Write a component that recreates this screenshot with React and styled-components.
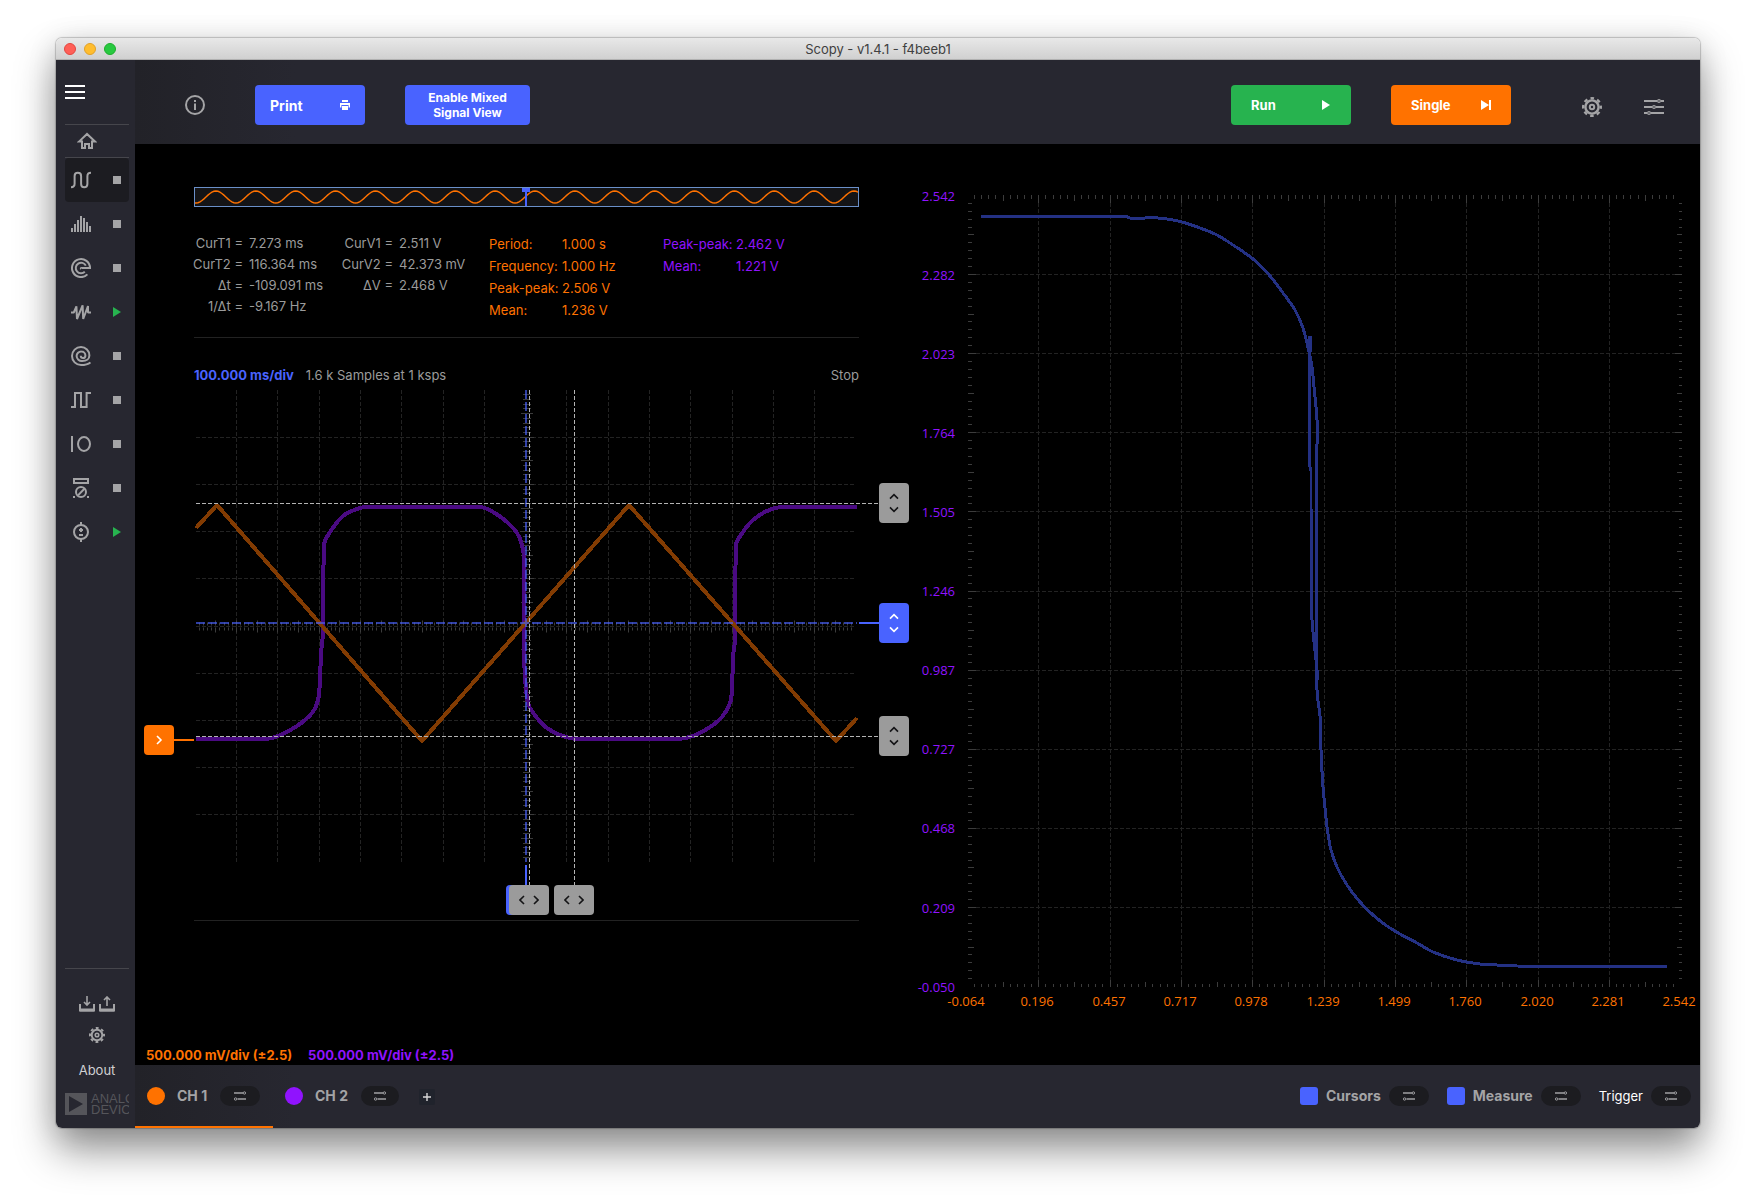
import styled, { createGlobalStyle } from "styled-components";

const TOOLS = [
	{ name: "Oscilloscope", icon: "scope", active: true },
	{ name: "Spectrum Analyzer", icon: "spectrum" },
	{ name: "Network Analyzer", icon: "network" },
	{ name: "Signal Generator", icon: "generator", running: true },
	{ name: "Logic Analyzer", icon: "logic" },
	{ name: "Pattern Generator", icon: "pattern" },
	{ name: "Digital IO", icon: "io" },
	{ name: "Voltmeter", icon: "voltmeter" },
	{ name: "Power Supply", icon: "power", running: true },
];

const TIME_CURSORS = [
	["CurT1 =", "7.273 ms"],
	["CurT2 =", "116.364 ms"],
	["Δt =", "-109.091 ms"],
	["1/Δt =", "-9.167 Hz"],
];

const VOLT_CURSORS = [
	["CurV1 =", "2.511 V"],
	["CurV2 =", "42.373 mV"],
	["ΔV =", "2.468 V"],
];

const CH1_STATS = [
	["Period:", "1.000 s"],
	["Frequency:", "1.000 Hz"],
	["Peak-peak:", "2.506 V"],
	["Mean:", "1.236 V"],
];

const CH2_STATS = [
	["Peak-peak:", "2.462 V"],
	["Mean:", "1.221 V"],
];

const Y_LABELS = ["2.542", "2.282", "2.023", "1.764", "1.505", "1.246", "0.987", "0.727", "0.468", "0.209", "-0.050"];
const X_LABELS = ["-0.064", "0.196", "0.457", "0.717", "0.978", "1.239", "1.499", "1.760", "2.020", "2.281", "2.542"];

// scope canvas, in its own units
const SCOPE = { w: 775, h: 526, left: 61, right: 722, top: 0, bottom: 472 };

const CH1_TRACE = "61,138 82,115 287,351 494,115 701,351 722,328";
const CH2_TRACE =
	"61,349 130,349 143,346 162,336 177,323 183,310 185,290 186,263 188,243 189,155 195,142 208,126 222,119 232,117 345,117 " +
	"358,122 372,132 382,143 387,155 389,170 389,263 391,300 393,313 395,318 402,328 412,338 425,345 442,349 542,349 " +
	"558,346 575,337 587,327 595,313 597,300 598,267 600,250 601,155 608,142 618,130 632,121 647,117 722,117";

const XY_TRACE =
	"71,33 218,33 219,34 248,34 257,35 272,38 290,44 307,51 323,61 343,75 360,92 373,109 385,126 393,144 399,168 402,183 " +
	"404,203 407,236 407,263 407,506 410,532 411,566 413,603 417,643 418,650 421,666 427,683 437,701 450,718 463,731 " +
	"477,742 490,750 507,759 523,768 547,776 570,780 587,781 607,782 617,782 757,782";
const XY_BACK_TRACE = "400,153 400,283 401,287 401,416 402,436 404,458 406,476 408,496";

const range = (n) => Array.from({ length: n }, (_, i) => i);

const tickSize = (i, sizes) => (i % 10 === 0 ? sizes[2] : i % 5 === 0 ? sizes[1] : sizes[0]);

// Joins sample points with a curve whose handles never outgrow their own segment
const smooth = (trace) => {
	const pts = trace.split(" ").map((p) => p.split(",").map(Number));
	const dir = pts.map((_, i) => {
		const a = pts[Math.max(i - 1, 0)];
		const b = pts[Math.min(i + 1, pts.length - 1)];
		const len = Math.hypot(b[0] - a[0], b[1] - a[1]);
		return [(b[0] - a[0]) / len, (b[1] - a[1]) / len];
	});
	let d = `M${pts[0]}`;
	for (let i = 1; i < pts.length; i++) {
		const [x0, y0] = pts[i - 1];
		const [x1, y1] = pts[i];
		const k = Math.min(Math.hypot(x1 - x0, y1 - y0) / 3, 12);
		const c0 = [x0 + dir[i - 1][0] * k, y0 + dir[i - 1][1] * k];
		const c1 = [x1 - dir[i][0] * k, y1 - dir[i][1] * k];
		d += `C${c0} ${c1} ${x1},${y1}`;
	}
	return d;
};

const ICONS = {
	scope: <path d="M0 17.2c2.5 0 3.6-1 3.6-3.4V6c0-2.2 1-3.2 3.2-3.2S10.1 4 10.1 6v8c0 2.2 1 3.2 3.1 3.2s3.2-1 3.2-3.2V6.2c0-2.4 1-3.4 3.6-3.4" />,
	spectrum: <path d="M1 18v-4M4 18v-8M7 18V6M10 18V2M13 18V4M16 18V8M19 18v-6" />,
	network: (
		<>
			<path d="M20 10h-9.6a.6.6 0 0 0-.4 1" />
			<path d="M19 10a9 9 0 1 0-2.6 6.4" />
			<path d="M14.8 7.6a5.3 5.3 0 1 0-1 6.2" />
		</>
	),
	generator: <path d="M0 10.5h2.8L5.4 4.4 6 17l5.6-13.6.6 13.6L17 4v6.5h3" strokeLinejoin="bevel" />,
	logic: (
		<path d="M19.4 16.4C17 18.4 13.5 19 10 19a9 9 0 0 1 0-18 8.4 8.4 0 0 1 8.4 8.4c0 3.2-2.8 5.6-7.2 5.6A5.2 5.2 0 0 1 5.6 10a4.6 4.6 0 0 1 4.8-4.5A4 4 0 0 1 14.4 9.4c0 1.6-1 2.6-2.4 2.6s-2.2-.8-2.2-2.2" />
	),
	pattern: <path d="M0 17h4V3h6v14h5.6V3H20" />,
	io: (
		<>
			<path d="M1 2v16" />
			<ellipse cx="13" cy="10" rx="6" ry="7" />
		</>
	),
	voltmeter: (
		<>
			<path d="M3 1h14v4H3zM7 17.4l6.4-6.6M2 19h2M16 19h2" />
			<circle cx="10" cy="14" r="5" />
		</>
	),
	power: (
		<>
			<circle cx="10" cy="10" r="7" />
			<path d="M10 0v3M10 17v3M10 6v4M8 8h4M8 13h4" />
		</>
	),
	home: <path d="M2 10.6 10 3l8 7.6h-3V17h-3v-4H8v4H5v-6.4z" />,
	info: (
		<>
			<circle cx="10" cy="10" r="9" />
			<path d="M10 8.6V15M10 5v2" />
		</>
	),
	gear: (
		<>
			<circle cx="10" cy="10" r="6.6" strokeWidth="2.4" />
			<circle cx="10" cy="10" r="8.8" strokeWidth="2.4" strokeDasharray="3.6 3.31" strokeDashoffset="1.8" />
			<circle cx="10" cy="10" r="2.2" />
		</>
	),
	sliders: (
		<>
			<path d="M0 4h13M17 4h3M0 10h8M12 10h8M0 16h3M7 16h13" />
			<circle cx="15" cy="4" r="1.4" strokeWidth="1.2" />
			<circle cx="10" cy="10" r="1.4" strokeWidth="1.2" />
			<circle cx="5" cy="16" r="1.4" strokeWidth="1.2" />
		</>
	),
};

const Icon = ({ name, size = 20, stroke = 2 }) => (
	<svg width={size} height={size} viewBox="0 0 20 20" fill="none" stroke="currentColor" strokeWidth={stroke} aria-hidden="true">
		{ICONS[name]}
	</svg>
);

const TrayIcon = ({ up }) => (
	<svg width="16" height="16" viewBox="0 0 16 16" fill="none" stroke="currentColor" aria-hidden="true">
		<path d="M1 8v6.5h14V8" strokeWidth="2" />
		<path d="M1 14h14" strokeWidth="3" />
		<path d={up ? "M8 10V1M5 4l3-3 3 3" : "M8 0v9M5 6l3 3 3-3"} strokeWidth="1.6" />
	</svg>
);

const PillIcon = () => (
	<svg width="12" height="10" viewBox="0 0 12 10" fill="none" stroke="currentColor" aria-hidden="true">
		<path d="M0 2h9M3.5 8H12" strokeWidth="1.4" />
		<circle cx="10.4" cy="2" r="1.2" />
		<circle cx="1.6" cy="8" r="1.2" />
	</svg>
);

const Chevrons = ({ axis }) => (
	<svg width="20" height="20" viewBox="0 0 20 20" fill="none" stroke="currentColor" strokeWidth="1.6" aria-hidden="true">
		{axis === "y" && <path d="M6 5.6 10 1.6l4 4M6 14.4l4 4 4-4" />}
		{axis === "x" && <path d="M5 6 1 10l4 4M15 6l4 4-4 4" />}
		{axis === "base" && <path d="M8 6l4 4-4 4" />}
	</svg>
);

const Readout = ({ rows, color, labelWidth, alignEnd, lineHeight }) => (
	<ReadoutList $color={color} $label={labelWidth} $alignEnd={alignEnd} $line={lineHeight}>
		{rows.map(([label, value]) => (
			<ReadoutRow key={label}>
				<dt>{label}</dt>
				<dd>{value}</dd>
			</ReadoutRow>
		))}
	</ReadoutList>
);

const Sidebar = () => (
	<Side>
		<MenuButton aria-label="Menu">
			<span />
			<span />
			<span />
		</MenuButton>
		<HomeButton aria-label="Home">
			<Icon name="home" />
		</HomeButton>
		<ToolList>
			{TOOLS.map((tool) => (
				<ToolItem key={tool.name} $active={tool.active}>
					<IconButton aria-label={tool.name}>
						<Icon name={tool.icon} />
					</IconButton>
					<IconButton aria-label={`${tool.running ? "Stop" : "Run"} ${tool.name}`}>
						{tool.running ? <RunMark /> : <StopMark />}
					</IconButton>
				</ToolItem>
			))}
		</ToolList>
		<SideFooter>
			<TrayRow>
				<IconButton aria-label="Load">
					<TrayIcon />
				</IconButton>
				<IconButton aria-label="Save">
					<TrayIcon up />
				</IconButton>
			</TrayRow>
			<IconButton aria-label="Preferences">
				<Icon name="gear" size={16} />
			</IconButton>
			<AboutLink href="#about">About</AboutLink>
			<Brand>
				<svg width="22" height="22" viewBox="0 0 22 22" aria-hidden="true">
					<path d="M0 0h22v22H0zM4 3v16l14-8z" fill="#55555a" fillRule="evenodd" />
				</svg>
				<BrandText>
					ANALOG
					<br />
					DEVICES
				</BrandText>
			</Brand>
		</SideFooter>
	</Side>
);

const Overview = () => {
	let d = "M0 16";
	for (let x = 1; x <= 665; x += 2) {
		d += `L${x} ${(10 + 6 * Math.cos(((x - 1) / 20) * Math.PI)).toFixed(2)}`;
	}
	return (
		<OverviewBox>
			<svg viewBox="0 0 665 18" preserveAspectRatio="none" aria-hidden="true">
				<path d={d} fill="none" stroke="#ff7200" strokeWidth="1.4" transform="translate(0 -1)" />
				<path d="M328 0h8v4h-3v14h-2V4h-3z" fill="#4963ff" />
			</svg>
		</OverviewBox>
	);
};

const Handle = ({ x, y, axis, tone, label }) => (
	<HandleButton
		aria-label={label}
		$axis={axis}
		$tone={tone}
		style={{ left: `${(x / SCOPE.w) * 100}%`, top: `${(y / SCOPE.h) * 100}%` }}
	>
		<Chevrons axis={axis} />
	</HandleButton>
);

const ScopePlot = () => {
	const dx = 41.3;
	const dy = 47.2;
	const cx = 391;
	const cy = 236.5;
	return (
		<PlotFrame>
			<svg viewBox={`0 0 ${SCOPE.w} ${SCOPE.h}`} fill="none" role="img" aria-label="Channel traces">
				<g stroke="#232323" strokeDasharray="4 2">
					{range(15).map((i) => {
						const x = Math.floor(60.2 + (i + 1) * dx) + 0.5;
						return i === 7 ? null : <path key={i} d={`M${x} ${SCOPE.top}V${SCOPE.bottom}`} />;
					})}
					{range(9).map((i) => {
						const y = Math.floor((i + 1) * dy) + 0.5;
						return <path key={i} d={`M${SCOPE.left} ${y}H${SCOPE.right - 2}`} />;
					})}
				</g>
				<g stroke="#3c3c3c">
					{range(159).map((i) => {
						const x = Math.floor(60.2 + (i + 1) * (dx / 10)) + 0.5;
						const t = tickSize(i + 1, [4, 6, 6]);
						return <path key={i} d={`M${x} ${cy - t}V${cy - 1}M${x} ${cy + 1}V${cy + t}`} />;
					})}
					{range(99).map((i) => {
						const y = Math.floor((i + 1) * (dy / 10)) + 0.5;
						const t = tickSize(i + 1, [4, 6, 7]);
						return <path key={i} d={`M${cx + 1 - t} ${y}H${cx + 1 + t}`} />;
					})}
				</g>
				<g strokeWidth="4" strokeLinejoin="round" shapeRendering="crispEdges">
					<path d={smooth(CH2_TRACE)} stroke="#4a0a82" />
					<polyline points={CH1_TRACE} stroke="#823b02" />
				</g>
				<g stroke="#4963ff" strokeWidth="2">
					<path d={`M${SCOPE.left} 233H${SCOPE.right}M${cx} 0V${SCOPE.bottom}`} strokeDasharray="9 3" opacity="0.65" />
					<path d={`M724 233H744M${cx} 475V495`} />
				</g>
				<path d="M61 113.5H744M61 346.5H744M394.5 0V495M439.5 0V495" stroke="#b4b4b4" strokeDasharray="4 2" />
				<path d="M39 350H59" stroke="#ff7200" strokeWidth="2" />
			</svg>
			<Handle x={391} y={510} axis="x" tone="blue" label="Trigger delay" />
			<Handle x={394} y={510} axis="x" tone="gray" label="Time cursor 1" />
			<Handle x={439} y={510} axis="x" tone="gray" label="Time cursor 2" />
			<Handle x={759} y={113} axis="y" tone="gray" label="Voltage cursor 1" />
			<Handle x={759} y={233} axis="y" tone="blue" label="Trigger level" />
			<Handle x={759} y={346} axis="y" tone="gray" label="Voltage cursor 2" />
			<Handle x={24} y={350} axis="base" tone="orange" label="Channel 1 offset" />
		</PlotFrame>
	);
};

const XYPlot = () => {
	const dx = 71.35;
	const dy = 79.12;
	const left = 57.4;
	const top = 11.4;
	return (
		<XYFrame>
			<svg viewBox="0 0 790 836" fill="none" role="img" aria-label="XY plot">
				<g stroke="#232323" strokeDasharray="4 2">
					{range(9).map((i) => (
						<path key={i} d={`M${Math.floor(left + (i + 1) * dx) + 0.5} 19V796`} />
					))}
					{range(9).map((i) => (
						<path key={i} d={`M66 ${Math.floor(top + (i + 1) * dy) + 0.5}H765`} />
					))}
				</g>
				<g stroke="#3c3c3c">
					{range(99).map((i) => {
						const x = Math.floor(left + (i + 1) * (dx / 10)) + 0.5;
						const y = Math.floor(top + (i + 1) * (dy / 10)) + 0.5;
						const t = tickSize(i + 1, [4, 6, 8]);
						return <path key={i} d={`M${x} 11v${t}M${x} 803v${1 - t}M58 ${y}h${t}M772 ${y}h${1 - t}`} />;
					})}
				</g>
				<g stroke="#243184" strokeWidth="3" strokeLinejoin="round" shapeRendering="crispEdges">
					<path d={smooth(XY_TRACE)} />
					<path d={smooth(XY_BACK_TRACE)} />
					<path d="M400 152v16" strokeWidth="4" />
				</g>
				<AxisText $color="#9013fe" textAnchor="end">
					{Y_LABELS.map((label, i) => (
						<text key={label} x="45" y={Math.floor(top + i * dy + 5.6)}>
							{label}
						</text>
					))}
				</AxisText>
				<AxisText $color="#ff7200" textAnchor="middle">
					{X_LABELS.map((label, i) => (
						<text key={label} x={Math.floor(left + i * dx) - 1} y="822">
							{label}
						</text>
					))}
				</AxisText>
			</svg>
		</XYFrame>
	);
};

const Pill = ({ label }) => (
	<PillButton aria-label={label}>
		<PillIcon />
	</PillButton>
);

const App = () => (
	<>
		<GlobalStyle />
		<Window>
			<TitleBar>
				<Lights>
					<Light $color="#ff5f57" $edge="#e2463f" aria-label="Close" />
					<Light $color="#ffbd2e" $edge="#e0a028" aria-label="Minimize" />
					<Light $color="#28c940" $edge="#1dad2b" aria-label="Zoom" />
				</Lights>
				<Title>Scopy - v1.4.1 - f4beeb1</Title>
			</TitleBar>
			<Body>
				<Sidebar />
				<Content>
					<Header>
						<IconButton aria-label="Info">
							<Icon name="info" />
						</IconButton>
						<PrintButton>
							Print
							<svg width="10" height="10" viewBox="0 0 10 10" fill="#fff" aria-hidden="true">
								<path d="M2 0h6v2H2zM0 3h10v4.5H8.6V5H1.4v2.5H0zM2 6h6v4H2z" />
							</svg>
						</PrintButton>
						<MixedButton>Enable Mixed Signal View</MixedButton>
						<Spacer />
						<RunButton>
							Run
							<svg width="10" height="10" viewBox="0 0 10 10" fill="#fff" aria-hidden="true">
								<path d="M1 0l8 5-8 5z" />
							</svg>
						</RunButton>
						<SingleButton>
							Single
							<svg width="10" height="10" viewBox="0 0 10 10" fill="#fff" aria-hidden="true">
								<path d="M0 0l8 5-8 5zM8 0h2v10H8z" />
							</svg>
						</SingleButton>
						<HeaderTools>
							<IconButton aria-label="Settings">
								<Icon name="gear" />
							</IconButton>
							<IconButton aria-label="General settings">
								<Icon name="sliders" />
							</IconButton>
						</HeaderTools>
					</Header>
					<Workspace>
						<ScopeColumn>
							<Overview />
							<Readouts>
								<Readout rows={TIME_CURSORS} color="#9b9b9b" labelWidth={49} lineHeight={21} alignEnd />
								<Readout rows={VOLT_CURSORS} color="#9b9b9b" labelWidth={50} lineHeight={21} alignEnd />
								<Readout rows={CH1_STATS} color="#ff7200" labelWidth={67} lineHeight={22} />
								<Readout rows={CH2_STATS} color="#9013fe" labelWidth={67} lineHeight={22} />
							</Readouts>
							<StatusRow>
								<Timebase>100.000 ms/div</Timebase>
								<span>1.6 k Samples at 1 ksps</span>
								<Spacer />
								<span>Stop</span>
							</StatusRow>
							<ScopePlot />
							<Divider />
							<ScaleRow>
								<Scale $color="#ff7200">500.000 mV/div (±2.5)</Scale>
								<Scale $color="#9013fe">500.000 mV/div (±2.5)</Scale>
							</ScaleRow>
						</ScopeColumn>
						<XYPlot />
					</Workspace>
					<Footer>
						<ChannelTab $active>
							<ChannelLabel>
								<Check type="checkbox" defaultChecked $color="#ff7200" $round />
								CH 1
							</ChannelLabel>
							<Pill label="Channel 1 settings" />
						</ChannelTab>
						<ChannelTab>
							<ChannelLabel>
								<Check type="checkbox" defaultChecked $color="#9013fe" $round />
								CH 2
							</ChannelLabel>
							<Pill label="Channel 2 settings" />
						</ChannelTab>
						<AddButton aria-label="Add channel">
							<svg width="8" height="8" viewBox="0 0 8 8" stroke="#d8d8d8" strokeWidth="1.4" aria-hidden="true">
								<path d="M4 0v8M0 4h8" />
							</svg>
						</AddButton>
						<Spacer />
						<Option>
							<OptionLabel>
								<Check type="checkbox" defaultChecked $color="#4963ff" />
								Cursors
							</OptionLabel>
							<Pill label="Cursor settings" />
						</Option>
						<Option>
							<OptionLabel>
								<Check type="checkbox" defaultChecked $color="#4963ff" />
								Measure
							</OptionLabel>
							<Pill label="Measure settings" />
						</Option>
						<Option>
							<TriggerName>Trigger</TriggerName>
							<Pill label="Trigger settings" />
						</Option>
					</Footer>
				</Content>
			</Body>
		</Window>
	</>
);

export default App;

const GlobalStyle = createGlobalStyle`
	* {
		box-sizing: border-box;
	}
	body {
		margin: 0;
		background: #fff;
		font-family: Inter, "Liberation Sans", sans-serif;
		font-size: 13px;
	}
	#root {
		display: flow-root;
	}
	button {
		font: inherit;
		cursor: pointer;
	}
	svg {
		display: block;
		flex-shrink: 0;
	}
`;

const Window = styled.div`
	display: flex;
	flex-direction: column;
	min-height: calc(100vh - 112px);
	margin: 38px 56px 74px;
	border-radius: 6px;
	overflow: hidden;
	box-shadow: 0 0 1px 1px rgba(0, 0, 0, 0.2), 0 22px 40px rgba(0, 0, 0, 0.42), 0 4px 30px rgba(0, 0, 0, 0.12);
`;

const TitleBar = styled.div`
	display: grid;
	grid-template-columns: 1fr auto 1fr;
	align-items: center;
	height: 22px;
	padding: 0 8px;
	background: linear-gradient(#e8e8e8, #d0d0d0);
	border-bottom: 1px solid #b0b0b0;
`;

const Lights = styled.div`
	display: flex;
	gap: 8px;
`;

const Light = styled.button`
	width: 12px;
	height: 12px;
	padding: 0;
	border: 1px solid ${(p) => p.$edge};
	border-radius: 50%;
	background: ${(p) => p.$color};
`;

const Title = styled.h1`
	margin: 0;
	font-size: 13px;
	line-height: 20px;
	font-weight: 400;
	color: #404040;
`;

const Body = styled.div`
	display: flex;
	flex: 1;
`;

const Side = styled.nav`
	display: flex;
	flex-direction: column;
	width: 79px;
	padding: 25px 6px 13px 9px;
	background: #272730;
	color: #a4a4a6;
`;

const IconButton = styled.button`
	display: flex;
	align-items: center;
	justify-content: center;
	padding: 0;
	border: 0;
	background: none;
	color: #a4a4a6;
`;

const MenuButton = styled.button`
	display: flex;
	flex-direction: column;
	gap: 4px;
	width: 20px;
	margin-bottom: 25px;
	padding: 0;
	border: 0;
	background: none;

	span {
		height: 2px;
		background: #fff;
	}
`;

const HomeButton = styled(IconButton)`
	width: 64px;
	height: 34px;
	padding-left: 12px;
	justify-content: flex-start;
	border-top: 1px solid #46464c;
	border-bottom: 1px solid #46464c;
`;

const ToolList = styled.ul`
	width: 64px;
	margin: 0;
	padding: 0;
	list-style: none;
`;

const ToolItem = styled.li`
	display: flex;
	align-items: center;
	justify-content: space-between;
	height: 44px;
	padding: 0 8px 0 6px;
	border-radius: 4px;
	background: ${(p) => (p.$active ? "#1c1c21" : "none")};
`;

const StopMark = styled.span`
	width: 8px;
	height: 8px;
	background: #a4a4a6;
`;

const RunMark = styled.span`
	border: solid transparent;
	border-width: 5px 0 5px 8px;
	border-left-color: #27b34f;
`;

const SideFooter = styled.div`
	display: flex;
	flex-direction: column;
	align-items: center;
	width: 64px;
	margin-top: auto;
	padding-top: 27px;
	border-top: 1px solid #46464c;
`;

const TrayRow = styled.div`
	display: flex;
	gap: 4px;
	margin-bottom: 15px;
`;

const AboutLink = styled.a`
	margin: 19px 0 15px;
	line-height: 16px;
	color: #d0d0d2;
	text-decoration: none;
`;

const Brand = styled.div`
	display: flex;
	gap: 4px;
	align-self: stretch;
	overflow: hidden;
`;

const BrandText = styled.span`
	font-family: "Liberation Sans", Arial, sans-serif;
	font-size: 13px;
	line-height: 11px;
	color: #55555a;
`;

const Content = styled.div`
	display: flex;
	flex: 1;
	flex-direction: column;
	min-width: 0;
`;

const Header = styled.header`
	display: flex;
	align-items: center;
	height: 84px;
	padding: 6px 36px 0 50px;
	background: linear-gradient(90deg, #222228, #272730 160px);
`;

const Spacer = styled.span`
	flex: 1;
`;

const ActionButton = styled.button`
	display: flex;
	align-items: center;
	justify-content: space-between;
	height: 40px;
	border: 0;
	border-radius: 4px;
	color: #fff;
	font-weight: 700;
`;

const PrintButton = styled(ActionButton)`
	width: 110px;
	margin-left: 50px;
	padding: 0 15px;
	background: #4963ff;
	font-size: 14px;
`;

const MixedButton = styled(ActionButton)`
	justify-content: center;
	width: 125px;
	margin-left: 40px;
	padding: 0 16px;
	background: #4963ff;
	font-size: 12px;
	line-height: 15px;
`;

const RunButton = styled(ActionButton)`
	width: 120px;
	padding: 0 20px;
	background: #27b34f;
	font-size: 13px;
`;

const SingleButton = styled(RunButton)`
	margin-left: 40px;
	background: #ff7200;
`;

const HeaderTools = styled.div`
	display: flex;
	gap: 42px;
	margin: 4px 0 0 71px;
`;

const Workspace = styled.main`
	display: flex;
	flex: 1;
	background: #000;
`;

const ScopeColumn = styled.section`
	display: flex;
	flex: 775 1 0;
	flex-direction: column;
	min-width: 0;
	padding-top: 43px;
`;

const OverviewBox = styled.div`
	margin: 0 51px 0 59px;
	border: 1px solid #6a8fc8;
	background: #141416;

	svg {
		width: 100%;
		height: 18px;
	}
`;

const Readouts = styled.div`
	display: grid;
	grid-template-columns: 149fr 146fr 174fr 196fr;
	height: 131px;
	margin: 0 51px 0 59px;
	padding-top: 26px;
	border-bottom: 1px solid #222;
`;

const ReadoutList = styled.dl`
	display: grid;
	grid-template-columns: ${(p) => p.$label}px 1fr;
	grid-auto-rows: ${(p) => p.$line}px;
	column-gap: 6px;
	margin: 0;
	line-height: ${(p) => p.$line}px;
	color: ${(p) => p.$color};
	white-space: nowrap;

	dt {
		display: flex;
		justify-content: ${(p) => (p.$alignEnd ? "flex-end" : "flex-start")};
	}
	dd {
		margin: 0;
	}
`;

const ReadoutRow = styled.div`
	display: contents;
`;

const StatusRow = styled.div`
	display: flex;
	gap: 12px;
	margin: 28px 51px 5px 59px;
	line-height: 19px;
	color: #9b9b9b;
`;

const Timebase = styled.strong`
	color: #4963ff;
`;

const PlotFrame = styled.div`
	position: relative;

	svg {
		width: 100%;
		height: auto;
	}
`;

const TONES = { gray: "#9b9b9b", blue: "#4963ff", orange: "#ff7200" };
const HANDLE_SIZE = { x: ["40px", "30px"], y: ["30px", "40px"], base: ["30px", "30px"] };

const HandleButton = styled.button`
	position: absolute;
	display: flex;
	align-items: center;
	justify-content: center;
	width: ${(p) => HANDLE_SIZE[p.$axis][0]};
	height: ${(p) => HANDLE_SIZE[p.$axis][1]};
	padding: 0;
	border: 0;
	border-radius: 4px;
	background: ${(p) => TONES[p.$tone]};
	color: ${(p) => (p.$tone === "gray" ? "#141416" : "#fff")};
	transform: translate(-50%, -50%);

	svg {
		width: 20px;
		height: 20px;
	}
`;

const Divider = styled.hr`
	width: calc(100% - 110px);
	margin: 4px 51px 0 59px;
	border: 0;
	border-top: 1px solid #222;
`;

const ScaleRow = styled.div`
	display: flex;
	gap: 16px;
	margin-top: auto;
	padding: 0 11px 1px;
	line-height: 18px;
`;

const Scale = styled.strong`
	color: ${(p) => p.$color};
`;

const XYFrame = styled.section`
	flex: 790 1 0;
	min-width: 0;
	padding-top: 40px;

	svg {
		width: 100%;
		height: auto;
	}
`;

const AxisText = styled.g`
	fill: ${(p) => p.$color};
	font-family: "Open Sans", "Noto Sans", sans-serif;
	font-size: 13px;
`;

const Footer = styled.footer`
	display: flex;
	align-items: center;
	height: 63px;
	padding-right: 9px;
	background: linear-gradient(90deg, #222228, #272730 160px);
`;

const ChannelTab = styled.div`
	display: flex;
	align-items: center;
	gap: 13px;
	width: 138px;
	height: 63px;
	padding: 0 12px;
	border-bottom: 2px solid ${(p) => (p.$active ? "#ff7200" : "transparent")};
`;

const ChannelLabel = styled.label`
	display: flex;
	align-items: center;
	gap: 12px;
	color: #a4a4a6;
	font-size: 14px;
	font-weight: 700;
	white-space: nowrap;
`;

const Check = styled.input`
	width: 18px;
	height: 18px;
	margin: 0;
	appearance: none;
	border-radius: ${(p) => (p.$round ? "50%" : "3px")};
	background: #1c1c21;

	&:checked {
		background: ${(p) => p.$color};
	}
`;

const PillButton = styled.button`
	display: flex;
	align-items: center;
	justify-content: center;
	width: 40px;
	height: 20px;
	padding: 0;
	border: 0;
	border-radius: 10px;
	background: #1c1c20;
	color: #a0a0a3;
`;

const AddButton = styled(PillButton)`
	width: 16px;
	height: 16px;
	margin-left: 8px;
	border-radius: 2px;
	background: #20232c;
`;

const Option = styled.div`
	display: flex;
	align-items: center;
	gap: 8px;
	margin-left: 18px;
	padding-bottom: 2px;
`;

const OptionLabel = styled(ChannelLabel)`
	gap: 8px;
`;

const TriggerName = styled.span`
	color: #fff;
	font-size: 13px;
`;
